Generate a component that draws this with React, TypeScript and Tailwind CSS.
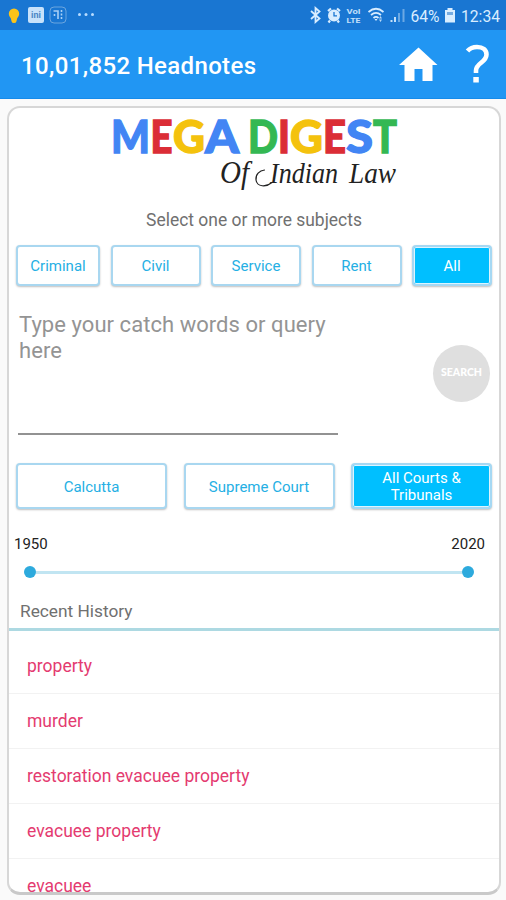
import { useState } from "react"

const SUBJECTS = [
  { name: "Criminal", width: "w-[84px]" },
  { name: "Civil", width: "w-[90px]" },
  { name: "Service", width: "w-[90px]" },
  { name: "Rent", width: "w-[90px]" },
  { name: "All", width: "w-[80px]" },
]

const COURTS = [
  { name: "Calcutta", width: "w-[151px]" },
  { name: "Supreme Court", width: "w-[151px]" },
  { name: "All Courts & Tribunals", width: "w-[141px]" },
]

const HISTORY = ["property", "murder", "restoration evacuee property", "evacuee property", "evacuee"]

const LOGO_LETTERS = [
  { char: "M", x: 3, width: 39, color: "#4285f4" },
  { char: "E", x: 42.5, width: 22, color: "#db2d36" },
  { char: "G", x: 65, width: 32, color: "#f4c20d" },
  { char: "A", x: 97, width: 34, color: "#4285f4" },
  { char: "D", x: 140, width: 30, color: "#34b853" },
  { char: "I", x: 170, width: 12, color: "#db2d36" },
  { char: "G", x: 182, width: 33, color: "#f4c20d" },
  { char: "E", x: 215, width: 23, color: "#db2d36" },
  { char: "S", x: 238, width: 27, color: "#4285f4" },
  { char: "T", x: 265, width: 24, color: "#34b853" },
]

function StatusBar() {
  return (
    <div className="flex h-[30px] shrink-0 items-center justify-between bg-[#1976d2] text-[#d9edff]">
      <svg width="110" height="30" viewBox="0 0 110 30" fill="none">
        <path d="M14 8.5a5.2 5.2 0 0 0-5.2 5.2c0 2 1.1 3.2 2 4.5l.8 3.2q.3 1.6 2.4 1.6t2.4-1.6l.8-3.2c.9-1.3 2-2.5 2-4.5A5.2 5.2 0 0 0 14 8.5Z" fill="#fcc419" />
        <rect x="28" y="7" width="16" height="16" rx="2" fill="#c8e2fb" />
        <text x="36" y="18.3" textAnchor="middle" fontFamily="Roboto, sans-serif" fontSize="9" fontWeight="700" fill="#4b87c5">ini</text>
        <rect x="50" y="7" width="16" height="16" rx="4" stroke="#6aa5df" />
        <path d="M53.5 11H58v8M54.5 14v2M61.5 10v2m0 1.5v2m0 1.5v2" stroke="#a9d0f5" strokeWidth="1.6" />
        <g fill="#b8dcff">
          <circle cx="79.5" cy="14.5" r="1.5" />
          <circle cx="86" cy="14.5" r="1.5" />
          <circle cx="92.5" cy="14.5" r="1.5" />
        </g>
      </svg>
      <svg width="200" height="30" viewBox="306 0 200 30" fill="none" fontFamily="Roboto, sans-serif">
        <path d="m311 11 8.5 7.5-4 3.5V8l4 3.5-8.5 7.5" stroke="#d9edff" strokeWidth="1.8" />
        <circle cx="334" cy="15.5" r="6" fill="#d9edff" />
        <path d="m328 11 3-2.5m9 2.5-3-2.5m-7 12-1.5 2m9-2 1.5 2" stroke="#d9edff" strokeWidth="2.2" />
        <path d="M334 12v3.8h3" stroke="#1976d2" strokeWidth="1.3" />
        <text x="346.5" y="14" fontSize="7.5" fontWeight="700" fill="#c4e0fa" textLength="14" lengthAdjust="spacingAndGlyphs">VoI</text>
        <text x="346.5" y="23" fontSize="7.5" fontWeight="700" fill="#c4e0fa" textLength="14" lengthAdjust="spacingAndGlyphs">LTE</text>
        <g stroke="#d9edff" strokeWidth="1.7">
          <path d="M368.5 12q7.5-6.5 15 0" />
          <path d="M371 15q5-4.300 10 0" />
          <path d="M373.5 18q2.5-2.3 5 0" />
        </g>
        <path d="m374.5 19 1.5 2 1.5-2Z" fill="#d9edff" />
        <path d="m379 18.5 1.5-2.5 1.5 2.5Zm0 1 1.5 2.5 1.5-2.5Z" fill="#b9daf8" />
        <path d="M391.5 22v-2m3.5 2v-5" stroke="#c4e0fa" strokeWidth="2" />
        <path d="M399 22v-9m4.5 9V9" stroke="#6ca8e3" strokeWidth="2" />
        <text x="410.5" y="21.5" fontSize="17" fill="#d9edff" textLength="29" lengthAdjust="spacingAndGlyphs">64%</text>
        <path d="M447.5 8h5v2h2.5v12.5h-10V10h2.5Z" fill="#d9edff" />
        <path d="M447 12h6v3h-6Z" fill="#75abe0" />
        <text x="461" y="21.5" fontSize="17" fill="#d9edff" textLength="39" lengthAdjust="spacingAndGlyphs">12:34</text>
      </svg>
    </div>
  )
}

function Header() {
  return (
    <header className="flex h-[69px] shrink-0 items-center justify-between border-b border-[#168bea] bg-[#2196f3] pl-[21px] text-white">
      <h1 className="pt-[3px] text-[24px] font-medium tracking-[0.35px]">10,01,852 Headnotes</h1>
      <svg width="116" height="68" viewBox="390 30 116 68" fill="none">
        <path d="M418.5 47.5 399 65h5.5v16h10V69h8v12h10V65h5Z" fill="white" />
        <path d="M467.500 51q3.500-4 9.500-4c6 0 9.500 3 9.500 7.500 0 8-10.500 8.500-10.500 16V73" stroke="white" strokeWidth="4.6" />
        <path d="M473.3 77h5.500v5.500h-5.500Z" fill="white" />
      </svg>
    </header>
  )
}

function Logo() {
  return (
    <svg className="mx-auto shrink-0" width="292" height="90" viewBox="0 0 292 90">
      <text y="44.5" fontFamily="Lato, sans-serif" fontSize="45" fontWeight="900" strokeWidth="1.3">
        {LOGO_LETTERS.map((letter, i) => (
          <tspan
            key={i}
            x={letter.x}
            fill={letter.color}
            stroke={letter.color}
            textLength={letter.width}
            lengthAdjust="spacingAndGlyphs"
          >
            {letter.char}
          </tspan>
        ))}
      </text>
      <g fontFamily="'Liberation Serif', serif" fontStyle="italic" fill="#222222">
        <text x="112" y="75" fontSize="31" textLength="29" lengthAdjust="spacingAndGlyphs">Of</text>
        <text x="162" y="75" fontSize="29" textLength="68" lengthAdjust="spacingAndGlyphs">Indian</text>
        <text x="241" y="75" fontSize="29" textLength="47" lengthAdjust="spacingAndGlyphs">Law</text>
      </g>
      {/* flourish that leads into the second word */}
      <path
        d="M164 74.500c-6 5-15 4.500-16-2.500-.7-5.500 3.500-9.500 8.500-10"
        fill="none"
        stroke="#222222"
        strokeWidth="1.2"
        strokeLinecap="round"
      />
    </svg>
  )
}

interface ChoiceProps {
  name: string
  active: boolean
  className: string
  onClick: () => void
}

function Choice({ name, active, className, onClick }: ChoiceProps) {
  return (
    <button
      onClick={onClick}
      className={`rounded-[4px] border-2 pt-[2px] text-[15px] leading-[17px] shadow-[0_1px_2px_rgba(0,0,0,0.25)] ${
        active
          ? "border-[#a5d8f3] bg-[#00bfff] text-white ring-1 ring-inset ring-[#ddf4ff]"
          : "border-[#a9d7f0] bg-white text-[#25afe4]"
      } ${className}`}
    >
      {name}
    </button>
  )
}

export default function App() {
  const [subject, setSubject] = useState("All")
  const [court, setCourt] = useState("All Courts & Tribunals")

  return (
    <div className="flex h-[900px] w-[506px] flex-col overflow-hidden bg-[#fafafa] font-[Roboto,sans-serif]">
      <StatusBar />
      <Header />

      <main className="mx-[7px] mt-[7px] mb-[5px] flex min-h-0 w-[494px] flex-1 flex-col overflow-hidden rounded-[13px] border-2 border-b-[3px] border-[#d7d7d7] border-b-[#c9c9c9] bg-white">
        <Logo />
        <p className="mt-[9px] h-[26px] text-center text-[17.45px] leading-[26px] text-[#707070]">
          Select one or more subjects
        </p>

        <div className="mt-[12px] flex shrink-0 justify-between pr-[7px] pl-[7px]">
          {SUBJECTS.map((s) => (
            <Choice
              key={s.name}
              name={s.name}
              active={subject === s.name}
              className={`h-[41px] ${s.width}`}
              onClick={() => setSubject(s.name)}
            />
          ))}
        </div>

        <div className="mt-[24px] flex shrink-0 items-start justify-between pr-[9px] pl-[9px]">
          <textarea
            className="h-[125px] w-[320px] resize-none border-b-2 border-[#929292] pt-[2px] pl-px text-[22px] leading-[26px] tracking-[0.05px] outline-none placeholder:text-[#949494]"
            placeholder="Type your catch words or query here"
          />
          <button className="mt-[35px] size-[57px] rounded-full bg-[#dfdfdf] pb-[2px] font-[Lato,sans-serif] text-[10.5px] font-black text-white">
            SEARCH
          </button>
        </div>

        <div className="mt-[28px] flex shrink-0 justify-between pr-[7px] pl-[7px]">
          {COURTS.map((c) => (
            <Choice
              key={c.name}
              name={c.name}
              active={court === c.name}
              className={`h-[46px] ${c.width}`}
              onClick={() => setCourt(c.name)}
            />
          ))}
        </div>

        <div className="mt-[25px] flex shrink-0 justify-between pr-[14px] pl-[5px] text-[15px] leading-5 text-[#222222]">
          <span>1950</span>
          <span>2020</span>
        </div>
        <div className="mt-[12px] flex shrink-0 items-center pr-[25px] pl-[15px]">
          <span className="size-3 rounded-full bg-[#2daadd]" />
          <span className="h-[3px] flex-1 bg-[#c1e5f2]" />
          <span className="size-3 rounded-full bg-[#2daadd]" />
        </div>

        <h2 className="mt-[20px] h-[33px] shrink-0 border-b-[3px] border-[#add9e2] pl-[11px] text-[17.3px] leading-[26px] text-[#707070]">
          Recent History
        </h2>
        <ul className="pt-[8px] text-[17.5px] text-[#e43b70]">
          {HISTORY.map((item) => (
            <li key={item} className="h-[55px] border-b border-[#f2f2f2] pl-[18px] leading-[55px]">
              {item}
            </li>
          ))}
        </ul>
      </main>
    </div>
  )
}
